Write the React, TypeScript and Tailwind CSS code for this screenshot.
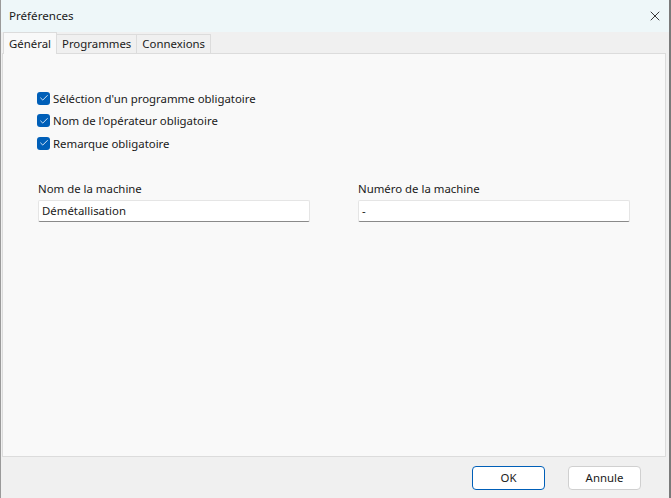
import { Check, X } from 'lucide-react';

const font = { fontFamily: '"Noto Sans", "Segoe UI", sans-serif' };

const CheckRow = ({ label }: { label: string }) => (
  <label className="flex items-center gap-[3px] h-[22.5px]">
    <span className="w-[13px] h-[13px] rounded-[3px] bg-[#005fb8] flex items-center justify-center">
      <Check size={10} strokeWidth={2} className="text-white" />
    </span>
    <span className="text-[11.4px] text-[#1a1a1a]">{label}</span>
  </label>
);

const Field = ({ label, value }: { label: string; value: string }) => (
  <div className="w-[272px] flex flex-col">
    <span className="text-[11.4px] text-[#1a1a1a] h-[18px] leading-[18px]">{label}</span>
    <div className="mt-[2px] h-[22px] bg-white border border-[#e5e5e5] border-b-[#8a8a8a] rounded-[2px] px-[3px] flex items-center text-[11.4px] text-[#1a1a1a]">
      {value}
    </div>
  </div>
);

export default function App() {
  return (
    <div style={font} className="w-[671px] h-[498px] flex flex-col bg-[#f0f0f0] border-l border-r-2 border-[#9a9a9a] border-r-[#7a7a7a] overflow-hidden select-none">
      {/* Title bar */}
      <div className="h-[32px] shrink-0 bg-[#eef7f9] flex items-center justify-between pl-[8px] pr-[6px]">
        <span className="text-[11.6px] text-[#1a1a1a]">Préférences</span>
        <X size={16} strokeWidth={1.3} className="text-[#1a1a1a]" />
      </div>

      {/* Tabs */}
      <div className="flex items-end h-[21px] pl-[2px] shrink-0">
        <div className="h-[22px] -mb-px px-[5px] flex items-center bg-[#f9f9f9] border border-[#dcdcdc] border-b-0 text-[11.4px] text-[#1a1a1a] relative z-10">
          Général
        </div>
        <div className="h-[19px] px-[5px] flex items-center border-t border-r border-[#dcdcdc] bg-[#f0f0f0] text-[11.4px] text-[#1a1a1a]">
          Programmes
        </div>
        <div className="h-[19px] px-[5px] flex items-center border-t border-r border-[#dcdcdc] bg-[#f0f0f0] text-[11.4px] text-[#1a1a1a]">
          Connexions
        </div>
      </div>

      {/* Panel */}
      <div className="mx-[1px] mr-[3px] h-[404px] shrink-0 bg-[#f9f9f9] border border-[#dcdcdc] flex flex-col pl-[34px] pt-[33px]">
        <div className="flex flex-col">
          <CheckRow label="Séléction d'un programme obligatoire" />
          <CheckRow label="Nom de l'opérateur obligatoire" />
          <CheckRow label="Remarque obligatoire" />
        </div>
        <div className="flex gap-[48px] mt-[25px] pl-[1px]">
          <Field label="Nom de la machine" value="Démétallisation" />
          <Field label="Numéro de la machine" value="-" />
        </div>
      </div>

      {/* Footer */}
      <div className="flex-1 flex items-start justify-end gap-[23px] pt-[9px] pr-[28px]">
        <button className="w-[73px] h-[24px] rounded-[4px] bg-white border border-[#005fb8] text-[11.4px] text-[#1a1a1a]">
          OK
        </button>
        <button className="w-[73px] h-[24px] rounded-[4px] bg-white border border-[#d0d0d0] text-[11.4px] text-[#1a1a1a]">
          Annule
        </button>
      </div>
    </div>
  );
}
